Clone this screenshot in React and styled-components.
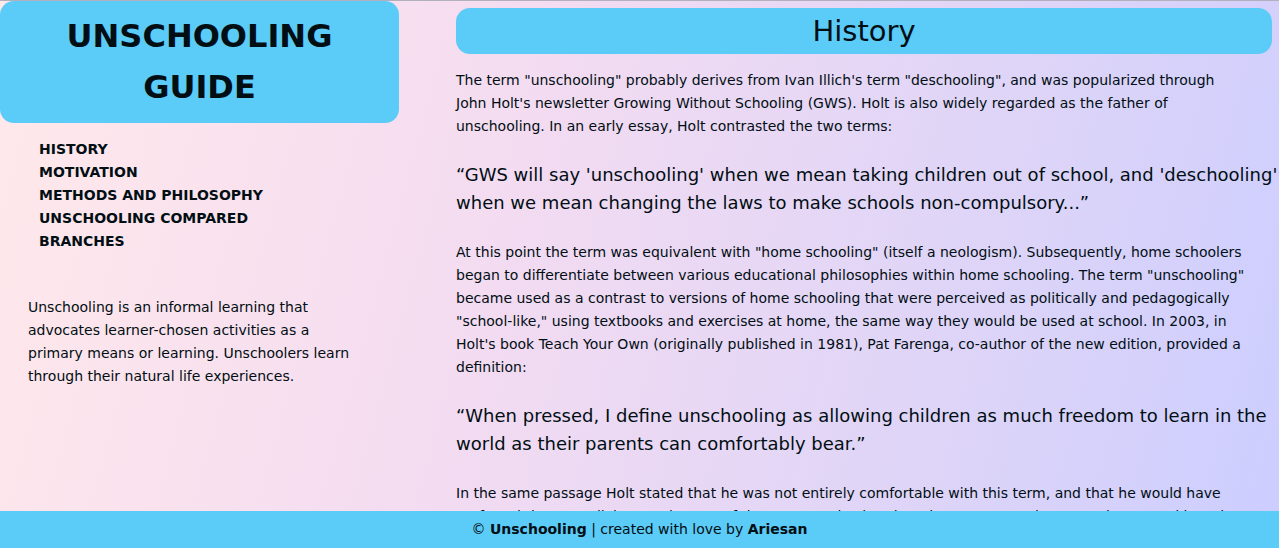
import React from "react";
import styled, { createGlobalStyle, ThemeProvider } from "styled-components";

const theme = {
  sky: "#5bcbf8",
  ink: "#010e13",
};

const GlobalStyle = createGlobalStyle`
  *, *::before, *::after { box-sizing: border-box; }
  body {
    margin: 0;
    font-family: "DejaVu Sans", sans-serif;
    font-size: 14px;
    line-height: 23px;
    color: ${theme.ink};
  }
  h1, h2, p, ul, blockquote { margin: 0; padding: 0; }
`;

const Page = styled.div`
  display: flex;
  flex-direction: column;
  height: 100vh;
  border-top: 1px solid #b2b0bd;
  background: linear-gradient(105deg, #ffe9ea, #f4dcf1 38%, #dad3f9 80%, #cdceff 98%);
`;

const Columns = styled.div`
  flex: 1;
  min-height: 0;
  display: grid;
  grid-template-columns: 399fr 880fr;
`;

const Sidebar = styled.aside`
  min-width: 0;
`;

const SiteTitle = styled.h1`
  padding: 10px 48px;
  border-radius: 14px;
  background: ${(p) => p.theme.sky};
  font-size: 32px;
  line-height: 51px;
  text-align: center;
  text-transform: uppercase;
`;

const Menu = styled.ul`
  && { padding: 15px 39px 0; }
  list-style: none;
`;

const MenuLink = styled.a`
  color: inherit;
  font-weight: bold;
  text-decoration: none;
  text-transform: uppercase;
`;

const Intro = styled.p`
  && { padding: 43px 39px 0 28px; }
`;

const Article = styled.main`
  min-width: 0;
  padding-left: 57px;
  overflow-y: auto;
  scrollbar-width: none;
`;

const SectionTitle = styled.h2`
  && { margin: 7px 7px 15px 0; }
  border-radius: 14px;
  background: ${(p) => p.theme.sky};
  font-size: 29px;
  font-weight: normal;
  line-height: 46px;
  text-align: center;
`;

const Paragraph = styled.p`
  && { padding-right: 31px; }
`;

const Quote = styled.blockquote`
  && { margin: 23px 0 24px; }
  font-size: 18px;
  line-height: 28px;
`;

const Footer = styled.footer`
  padding: 7px;
  background: ${(p) => p.theme.sky};
  text-align: center;
`;

const sections = [
  "History",
  "Motivation",
  "Methods and Philosophy",
  "Unschooling Compared",
  "Branches",
];

export default function App() {
  return (
    <ThemeProvider theme={theme}>
      <GlobalStyle />
      <Page>
        <Columns>
          <Sidebar>
            <SiteTitle>Unschooling Guide</SiteTitle>
            <nav aria-label="Sections">
              <Menu>
                {sections.map((name) => (
                  <li key={name}>
                    <MenuLink href={`#${name.toLowerCase().replace(/ /g, "-")}`}>
                      {name}
                    </MenuLink>
                  </li>
                ))}
              </Menu>
            </nav>
            <Intro>
              Unschooling is an informal learning that advocates learner-chosen
              activities as a primary means or learning. Unschoolers learn
              through their natural life experiences.
            </Intro>
          </Sidebar>
          <Article>
            <SectionTitle id="history">History</SectionTitle>
            <Paragraph>
              The term "unschooling" probably derives from Ivan Illich's term
              "deschooling", and was popularized through John Holt's newsletter
              Growing Without Schooling (GWS). Holt is also widely regarded as
              the father of unschooling. In an early essay, Holt contrasted the
              two terms:
            </Paragraph>
            <Quote>
              “GWS will say 'unschooling' when we mean taking children out of
              school, and 'deschooling' when we mean changing the laws to make
              schools non-compulsory...”
            </Quote>
            <Paragraph>
              At this point the term was equivalent with "home schooling"
              (itself a neologism). Subsequently, home schoolers began to
              differentiate between various educational philosophies within
              home schooling. The term "unschooling" became used as a contrast
              to versions of home schooling that were perceived as politically
              and pedagogically "school-like," using textbooks and exercises at
              home, the same way they would be used at school. In 2003, in
              Holt's book Teach Your Own (originally published in 1981), Pat
              Farenga, co-author of the new edition, provided a definition:
            </Paragraph>
            <Quote>
              “When pressed, I define unschooling as allowing children as much
              freedom to learn in the world as their parents can comfortably
              bear.”
            </Quote>
            <Paragraph>
              In the same passage Holt stated that he was not entirely
              comfortable with this term, and that he would have preferred the
              term "living". Holt's use of the term emphasizes learning as a
              natural process, integrated into the spaces and activities of
              everyday life.
            </Paragraph>
          </Article>
        </Columns>
        <Footer>
          © <strong>Unschooling</strong> | created with love by{" "}
          <strong>Ariesan</strong>
        </Footer>
      </Page>
    </ThemeProvider>
  );
}
